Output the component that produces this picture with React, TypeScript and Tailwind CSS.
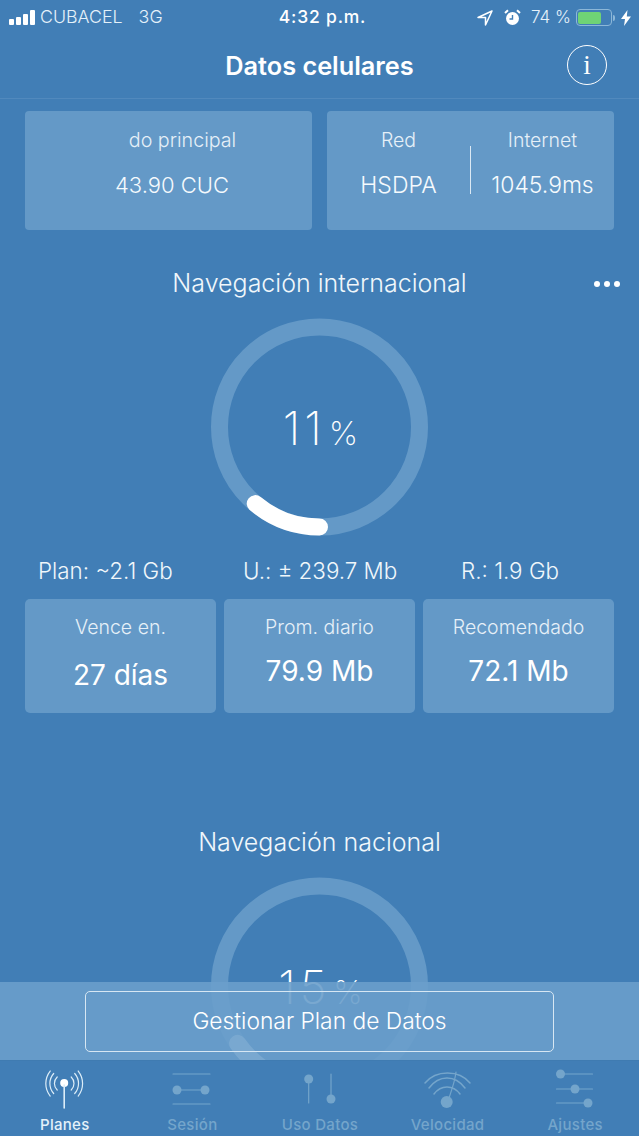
const font = "font-['Inter','Liberation_Sans',sans-serif]";

function Gauge({ value, start, end }: { value: number; start: number; end: number }) {
  const cx = 108.5;
  const cy = 109;
  const r = 100;
  const pt = (deg: number) => {
    const a = (deg * Math.PI) / 180;
    return `${cx + r * Math.sin(a)} ${cy + r * Math.cos(a)}`;
  };
  return (
    <div className="relative h-[218px] w-[218px]">
      <svg width="218" height="218" viewBox="0 0 218 218" className="block">
        <circle cx={cx} cy={cy} r={r} fill="none" stroke="#6499c7" strokeWidth="17" />
        <path d={`M${pt(start)} A${r} ${r} 0 0 0 ${pt(end)}`} fill="none" stroke="#ffffff" strokeWidth="17" strokeLinecap="round" />
      </svg>
      <div className="absolute inset-x-0 top-[83px] ml-[2px] flex items-baseline justify-center font-extralight text-white">
        <span className="text-[46px] leading-[54px] tracking-[4px]">{value}</span>
        <span className="ml-[3px] text-[33px] leading-[54px]">%</span>
      </div>
    </div>
  );
}

function StatCard({ label, value, drop }: { label: string; value: string; drop?: boolean }) {
  return (
    <div className="flex h-[114px] flex-1 flex-col items-center rounded-[5px] bg-[#6499c7] pt-[17px]">
      <span className="text-[19.5px] font-light leading-[22px] text-[#e6f0f8]">{label}</span>
      <span className={`text-[28px] leading-[34px] text-white ${drop ? "mt-[20px]" : "mt-[16px]"}`}>{value}</span>
    </div>
  );
}

function TabIcon({ name }: { name: string }) {
  const color = name === "Planes" ? "#dcedf8" : "#74a5cb";
  return (
    <svg width="40" height="40" viewBox="0 0 40 40" fill="none" stroke={color} strokeWidth="1.2" strokeLinecap="round" className="overflow-visible">
      {name === "Planes" && (
        <g transform="translate(-0.8 1)">
          <circle cx="20" cy="13" r="4" fill="#ffffff" stroke="none" />
          <path d="M20 15V38" strokeWidth="1.6" />
          <path d="M13 7a9 9 0 0 0 0 13M27 7a9 9 0 0 1 0 13M9.500 3.500a15 15 0 0 0 0 20M30.500 3.500a15 15 0 0 1 0 20M6 1a20 20 0 0 0 0 25M34 1a20 20 0 0 1 0 25" />
        </g>
      )}
      {name === "Sesión" && (
        <>
          <path d="M1 5H38M1 35H38M9 21H30" />
          <circle cx="5" cy="21" r="4.500" fill={color} stroke="none" />
          <circle cx="33" cy="21" r="4.500" fill={color} stroke="none" />
        </>
      )}
      {name === "Uso Datos" && (
        <>
          <circle cx="8.700" cy="10" r="4.500" fill={color} stroke="none" />
          <path d="M8.700 13V34M31 5V28" />
          <circle cx="31" cy="30" r="4.500" fill={color} stroke="none" />
        </>
      )}
      {name === "Velocidad" && (
        <>
          <path d="M-3 14C8 0.670 31 0.670 42 14M1 19C11 5.670 27 5.670 37 19M6 25C13 15.670 25 15.670 32 25" strokeWidth="1.500" />
          <path d="M28 3C27 12 24 20 21 29" />
          <circle cx="18.700" cy="33" r="6" fill={color} stroke="none" />
        </>
      )}
      {name === "Ajustes" && (
        <>
          <path d="M5.500 5H37.500M1.500 20H37.500M1.500 34H33" />
          <circle cx="5.500" cy="5" r="4.500" fill={color} stroke="none" />
          <circle cx="20" cy="20" r="4.500" fill={color} stroke="none" />
          <circle cx="33" cy="34" r="4.500" fill={color} stroke="none" />
        </>
      )}
    </svg>
  );
}

export default function App() {
  const tabs = ["Planes", "Sesión", "Uso Datos", "Velocidad", "Ajustes"];
  return (
    <div className={`relative h-[1136px] w-[639px] overflow-hidden bg-[#417eb6] ${font}`}>
      {/* status bar */}
      <div className="flex h-[33px] items-center justify-between pl-[9px] pr-[8px] pt-[2px] text-[#e4f1fa]">
        <div className="flex w-[200px] items-center text-[17.8px] font-light">
          <div className="flex items-end gap-[2px]">
            <span className="h-[6px] w-[5px] rounded-[1px] bg-white" />
            <span className="h-[8px] w-[5px] rounded-[1px] bg-white" />
            <span className="h-[11px] w-[5px] rounded-[1px] bg-white" />
            <span className="h-[15px] w-[5px] rounded-[1px] bg-white" />
          </div>
          <span className="ml-[5px]">CUBACEL</span>
          <span className="ml-[16px]">3G</span>
        </div>
        <span className="ml-[5px] text-[17.5px] font-medium tracking-[0.8px] text-white">4:32 p.m.</span>
        <div className="flex w-[200px] items-center justify-end text-[17px] font-light">
          <svg width="16" height="16" viewBox="0 0 16 16" fill="none" stroke="#fff" strokeWidth="1.500" strokeLinejoin="round">
            <path d="M15 1L1 7.500H8.500V15Z" />
          </svg>
          <svg width="17" height="17" viewBox="0 0 17 17" className="ml-[11px]">
            <circle cx="8.500" cy="9.500" r="6.500" fill="#fff" />
            <path d="M8.500 6V10H5.500" fill="none" stroke="#417eb6" strokeWidth="1.400" />
            <path d="M1 4L4 1.200M16 4L13 1.200" stroke="#fff" strokeWidth="2" />
          </svg>
          <span className="ml-[10px]">74 %</span>
          <div className="ml-[5px] flex h-[17px] w-[36px] items-center rounded-[4px] border border-[#8cb7d8] p-[1.5px]">
            <div className="h-full w-[72%] rounded-[2px] bg-[#6fd375]" />
          </div>
          <span className="ml-[1px] h-[6px] w-[2px] rounded-r-sm bg-[#8cb7d8]" />
          <svg width="10" height="16" viewBox="0 0 10 16" className="ml-[6px]">
            <path d="M6.500 0L0 9H4L3 16L10 6.500H5.800Z" fill="#fff" />
          </svg>
        </div>
      </div>

      {/* nav */}
      <div className="relative flex h-[66px] items-center justify-center border-b border-[#5189bd]">
        <span className="text-[25.3px] font-semibold text-white">Datos celulares</span>
        <div className="absolute right-[32px] top-[12px] flex h-[40px] w-[40px] items-center justify-center rounded-full border-[1.5px] border-white font-['Liberation_Serif',serif] text-[27px] leading-none text-white">
          i
        </div>
      </div>

      {/* top cards */}
      <div className="mt-[12px] flex gap-[15px] px-[25px]">
        <div className="flex h-[119px] w-[287px] flex-col items-center rounded-[4px] bg-[#6499c7] pt-[17px]">
          <span className="ml-[28px] text-[19.7px] font-light leading-[24px] text-[#e6f0f8]">do principal</span>
          <span className="ml-[7px] mt-[21px] text-[22px] font-light leading-[24px] text-[#f5fafd]">43.90 CUC</span>
        </div>
        <div className="flex h-[119px] flex-1 items-center rounded-[4px] bg-[#6499c7]">
          <div className="flex h-full flex-1 flex-col items-center pt-[17px]">
            <span className="text-[19.5px] font-light leading-[24px] text-[#e6f0f8]">Red</span>
            <span className="mt-[21px] text-[23px] font-light leading-[24px] text-[#f5fafd]">HSDPA</span>
          </div>
          <div className="mt-[-1px] h-[48px] w-px bg-[#dbe9f4]" />
          <div className="flex h-full w-[143px] flex-col items-center pt-[17px]">
            <span className="text-[19.5px] font-light leading-[24px] text-[#e6f0f8]">Internet</span>
            <span className="mt-[21px] text-[22.9px] font-light leading-[24px] text-[#f5fafd]">1045.9ms</span>
          </div>
        </div>
      </div>

      {/* international plan */}
      <div className="relative mt-[38px] text-center text-[25px] font-light leading-[30px] text-[#f0f7fb]">
        Navegación internacional
        <div className="absolute right-[19px] top-[13px] flex gap-[4px]">
          <span className="h-[6px] w-[6px] rounded-full bg-white" />
          <span className="h-[6px] w-[6px] rounded-full bg-white" />
          <span className="h-[6px] w-[6px] rounded-full bg-white" />
        </div>
      </div>
      <div className="mt-[20px] flex justify-center">
        <Gauge value={11} start={320} end={360} />
      </div>
      <div className="mt-[22px] flex text-[22.4px] font-light leading-[26px] text-[#f0f7fb]">
        <span className="ml-[38px] w-[205px]">Plan: ~2.1 Gb</span>
        <span className="w-[218px]">U.: ± 239.7 Mb</span>
        <span>R.: 1.9 Gb</span>
      </div>
      <div className="mt-[15px] flex gap-[8px] px-[25px]">
        <StatCard label="Vence en." value="27 días" drop />
        <StatCard label="Prom. diario" value="79.9 Mb" />
        <StatCard label="Recomendado" value="72.1 Mb" />
      </div>

      {/* national plan */}
      <div className="mt-[114px] text-center text-[25px] font-light leading-[30px] text-[#f0f7fb]">Navegación nacional</div>
      <div className="mt-[20px] flex justify-center">
        <Gauge value={15} start={305} end={360} />
      </div>

      {/* manage bar */}
      <div className="absolute inset-x-0 top-[982px] flex h-[78px] items-start justify-center bg-[#6a9ecb]/90 pt-[9px]">
        <div className="flex h-[61px] w-[469px] items-center justify-center rounded-[5px] border border-[#d7e7f3] text-[22.8px] font-light text-white">
          Gestionar Plan de Datos
        </div>
      </div>

      {/* tab bar */}
      <div className="absolute inset-x-0 top-[1060px] flex h-[76px] border-t border-[#3f7bb1] bg-[#417eb6] pl-[1px]">
        {tabs.map((t) => (
          <div key={t} className="flex w-[127.6px] flex-col items-center pt-[8px]">
            <TabIcon name={t} />
            <span className={`mt-[6px] text-[15px] font-medium leading-[20px] tracking-[0.3px] ${t === "Planes" ? "text-[#e4f1fa]" : "text-[#74a5cb]"}`}>
              {t}
            </span>
          </div>
        ))}
      </div>
    </div>
  );
}
